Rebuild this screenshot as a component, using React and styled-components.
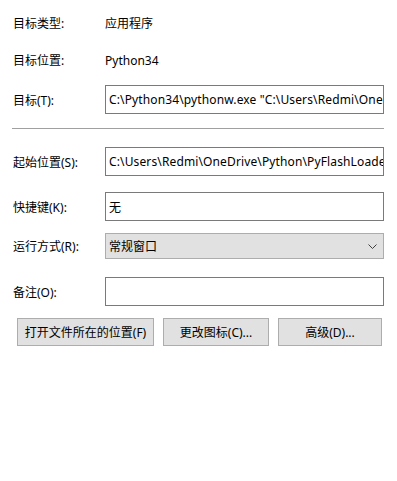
import React from "react";
import styled, { createGlobalStyle } from "styled-components";

// ------------ Variables -------------------
const font_stack = `"Noto Sans", "Noto Sans CJK SC", sans-serif`;
const border_input = "#7a7a7a";
const border_button = "#adadad";
const face_button = "#e1e1e1";
// ----- end of Variables -------------------

// --------------- Styles -------------------
const GlobalStyle = createGlobalStyle`
  html, body {
    margin: 0;
    padding: 0;
    background: #ffffff;
  }
  body {
    font-family: ${font_stack};
    font-size: 12px;
    color: #000000;
  }
`;

const Page = styled.div`
  box-sizing: border-box;
  width: 397px;
  height: 481px;
  padding: 11px 13px 0 12px;
  display: flex;
  flex-direction: column;
`;

const Row = styled.div`
  display: grid;
  grid-template-columns: 93px 1fr;
  align-items: center;
  height: ${(p) => p.h || 29}px;
  margin-top: ${(p) => p.mt || 0}px;
`;

const Label = styled.span`
  padding-left: 1px;
  white-space: nowrap;
`;

const Value = styled.span`
  white-space: nowrap;
`;

const Field = styled.div`
  box-sizing: border-box;
  height: 100%;
  border: 1px solid ${border_input};
  background: #ffffff;
  padding: 0 3px;
  display: flex;
  align-items: center;
  overflow: hidden;
  white-space: nowrap;
  letter-spacing: 0.13px;
`;

const Select = styled.div`
  box-sizing: border-box;
  height: 100%;
  border: 1px solid ${border_button};
  background: ${face_button};
  padding: 0 6px 0 3px;
  display: flex;
  align-items: center;
  justify-content: space-between;
`;

const Divider = styled.div`
  height: 1px;
  background: #a0a0a0;
  margin: 14px 0 18px 0;
`;

const Buttons = styled.div`
  display: flex;
  gap: 9px;
  margin-top: 12px;
  padding-left: 5px;
`;

const Button = styled.div`
  box-sizing: border-box;
  width: ${(p) => p.w}px;
  height: 28px;
  border: 1px solid ${border_button};
  background: ${face_button};
  display: flex;
  align-items: center;
  justify-content: center;
  white-space: nowrap;
`;
// -------- end of Styles -------------------

const Chevron = () => (
  <svg width="9" height="5" viewBox="0 0 9 5">
    <path d="M0.5 0.5 L4.5 4.5 L8.5 0.5" fill="none" stroke="#404040" strokeWidth="1" />
  </svg>
);

export default function App() {
  return (
    <>
      <GlobalStyle />
      <Page>
        <Row h={24}>
          <Label>目标类型:</Label>
          <Value>应用程序</Value>
        </Row>
        <Row h={24} mt={13}>
          <Label>目标位置:</Label>
          <Value>Python34</Value>
        </Row>
        <Row mt={13}>
          <Label>目标(T):</Label>
          <Field>C:\Python34\pythonw.exe "C:\Users\Redmi\OneDrive\Python\PyFlashLoader.pyw"</Field>
        </Row>

        <Divider />

        <Row>
          <Label>起始位置(S):</Label>
          <Field>C:\Users\Redmi\OneDrive\Python\PyFlashLoader</Field>
        </Row>
        <Row mt={16}>
          <Label>快捷键(K):</Label>
          <Field>无</Field>
        </Row>
        <Row h={26} mt={12}>
          <Label>运行方式(R):</Label>
          <Select>
            <span>常规窗口</span>
            <Chevron />
          </Select>
        </Row>
        <Row mt={18}>
          <Label>备注(O):</Label>
          <Field />
        </Row>

        <Buttons>
          <Button w={137}>打开文件所在的位置(F)</Button>
          <Button w={106}>更改图标(C)...</Button>
          <Button w={104}>高级(D)...</Button>
        </Buttons>
      </Page>
    </>
  );
}
